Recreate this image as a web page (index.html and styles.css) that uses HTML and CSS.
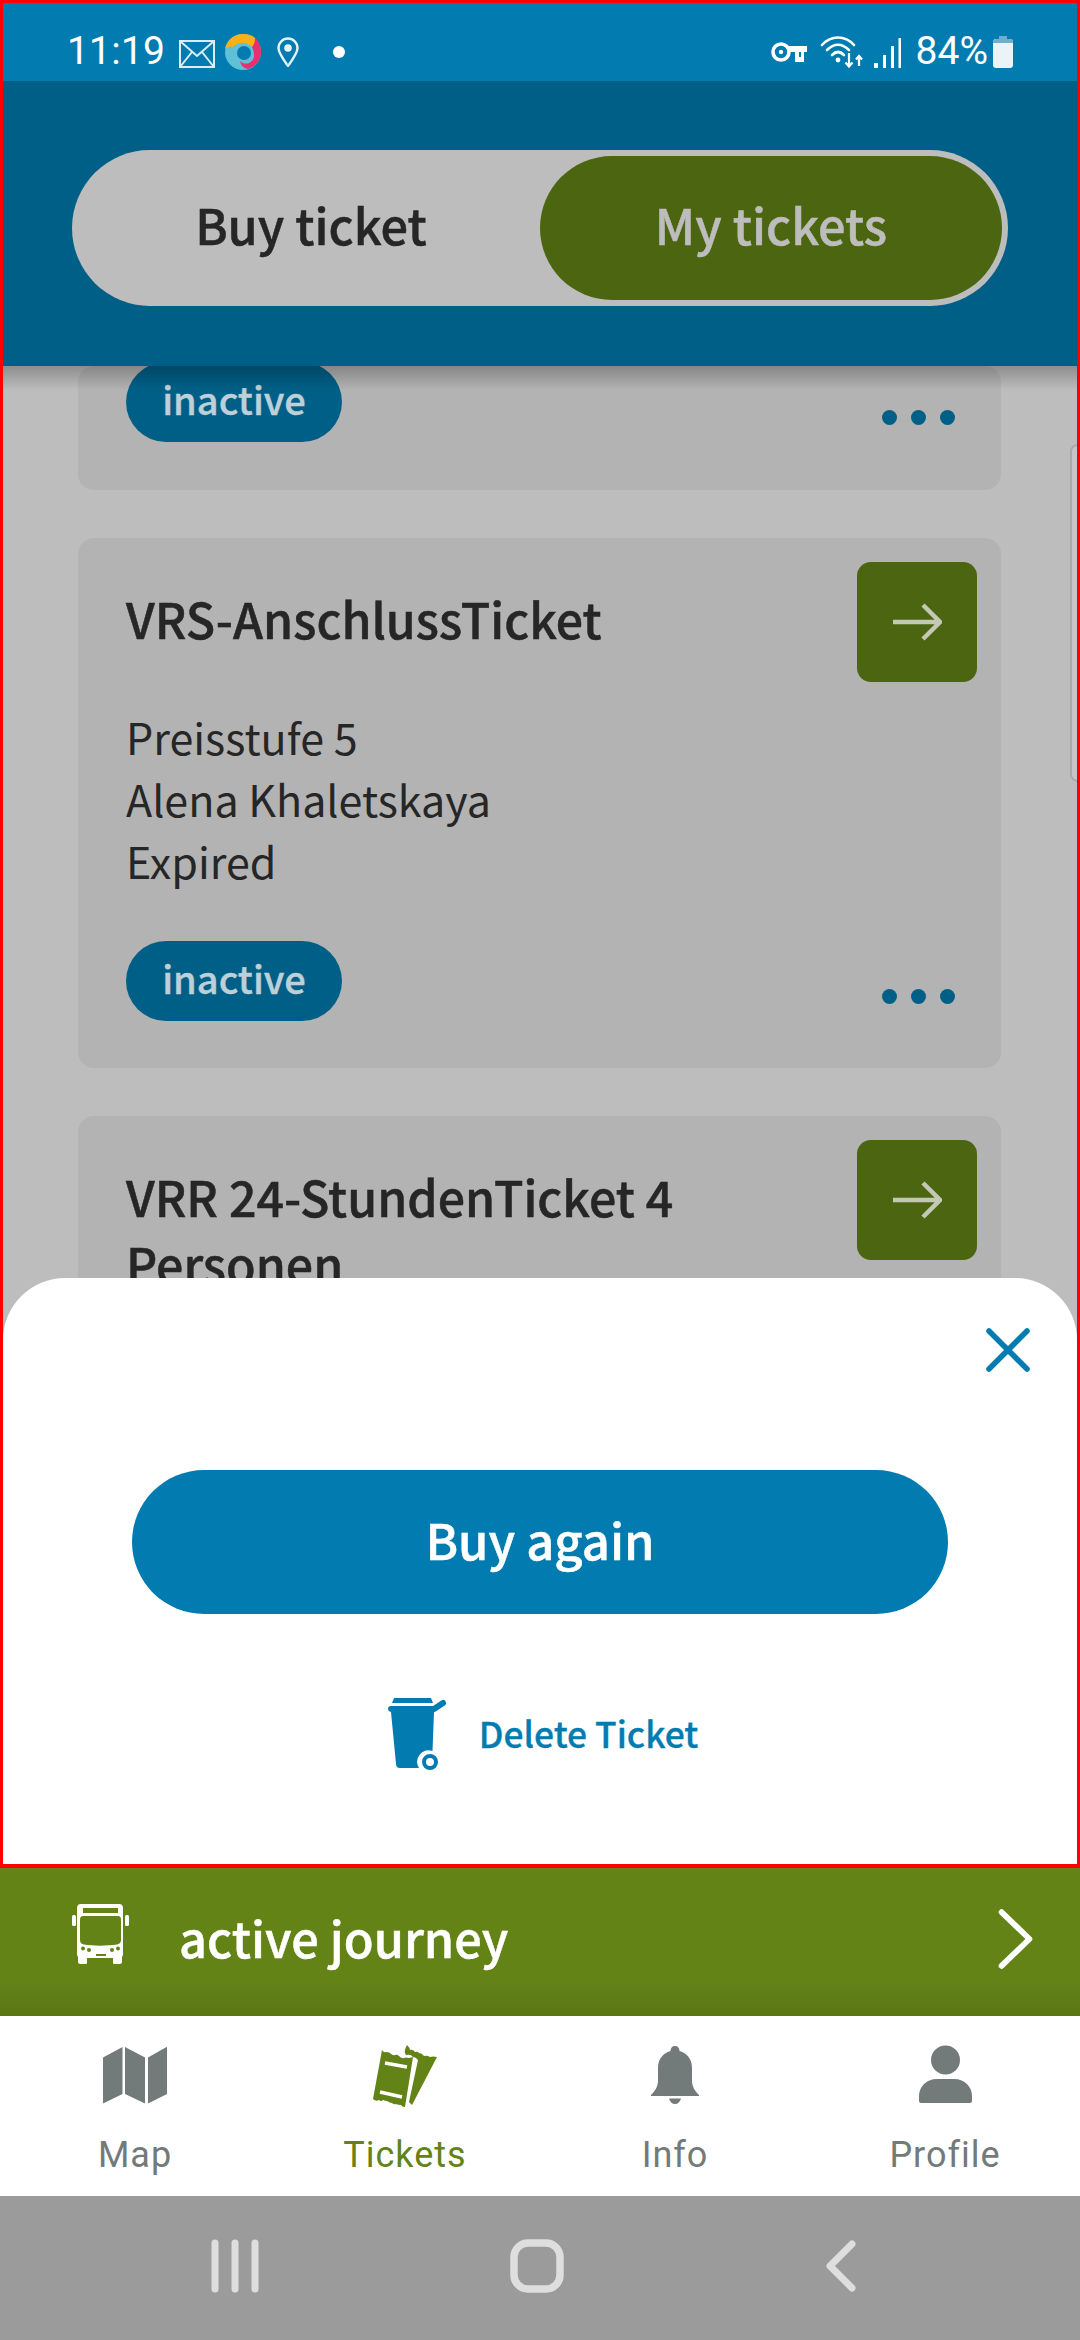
FILE: index.html
```html
<!DOCTYPE html>
<html lang="en">
<head>
<meta charset="utf-8">
<title>My tickets</title>
<link rel="stylesheet" href="styles.css">
</head>
<body>
<div class="page">
  <div class="frame">
    <div class="status">
      <div class="status-group">
        <span class="time">11:19</span>
        <svg class="i-mail" viewBox="0 0 36 28"><path d="M1 1h34v26H1zM1 1l17 15L35 1M1 27l12-15M35 27L23 12" fill="none" stroke="#dcedf5" stroke-width="2"/></svg>
        <svg class="i-app" viewBox="0 0 36 36"><circle cx="18" cy="18" r="18" fill="#5fc0d8"/><path d="M0 15C2 5 10 0 18 0c5 0 9 1 12 4 1 4-1 7-3 9-3-3-7-5-11-4-4 0-6 2-8 4-3-1-6 0-8 2z" fill="#fbb016"/><path d="M30 4c4 3 6 9 6 14 0 9-6 15-13 17-5-1-7-4-8-8 3 3 6 3 9 2 4-2 5-5 5-8s-1-6-2-8c2-2 3-5 3-9z" fill="#e8306f"/><circle cx="19" cy="19" r="7" fill="#027cb0"/></svg>
        <svg class="i-pin" viewBox="0 0 22 30"><path d="M11 29C6 22 1.500 16 1.500 11a9.500 9.500 0 0 1 19 0C20.500 16 16 22 11 29z" fill="none" stroke="#e8f3f8" stroke-width="2.400"/><circle cx="11" cy="11" r="3.800" fill="#e8f3f8"/></svg>
        <span class="dot"></span>
      </div>
      <div class="status-group status-right">
        <svg class="i-key" viewBox="0 0 36 20"><circle cx="10" cy="10" r="8" fill="none" stroke="#fff" stroke-width="3.600"/><circle cx="10" cy="10" r="2.200" fill="#fff"/><path d="M17 4h19v6h-3v10h-9V10h-7z" fill="#fff"/><path d="M28 10h2v5h-2z" fill="#027cb0"/></svg>
        <svg class="i-wifi" viewBox="0 0 44 34"><path d="M2 10C11 0 25 0 34 10M7 15c7-7 15-7 22 0M12 20c4-4 8-4 12 0" fill="none" stroke="#fff" stroke-width="2.600" stroke-linecap="round"/><circle cx="18" cy="25" r="2.400" fill="#fff"/><path d="M29 18v13M25.500 27.500l3.500 4 3.500-4M39 31V21M36 24.500l3-3.500 3 3.500" fill="none" stroke="#fff" stroke-width="2.200"/></svg>
        <svg class="i-signal" viewBox="0 0 27 30"><path d="M0 25h4v5H0zM9 17h3v13H9zM17 8h3v22h-3zM24.500 0h2.500v30h-2.500z" fill="#fff"/></svg>
        <span class="battery-text">84%</span>
        <svg class="i-batt" viewBox="0 0 20 32"><path d="M6 0h8v3H6z" fill="#6eaed0"/><rect y="3" width="20" height="29" rx="3" fill="#e9f3f8"/><path d="M0 6a3 3 0 0 1 3-3h14a3 3 0 0 1 3 3v1H0z" fill="#6eaed0"/></svg>
      </div>
    </div>
    <header class="top">
      <div class="toggle">
        <div class="toggle-item">Buy ticket</div>
        <div class="toggle-item toggle-on">My tickets</div>
      </div>
    </header>
    <main class="content">
      <div class="list">
        <article class="card card-clipped">
          <div class="card-foot">
            <span class="pill">inactive</span>
            <span class="dots"><i></i><i></i><i></i></span>
          </div>
        </article>
        <article class="card">
          <div class="card-head">
            <h2 class="card-title">VRS-AnschlussTicket</h2>
            <span class="go"><svg viewBox="0 0 50 38"><path d="M1 19h46M31 2l17 17-17 17" fill="none" stroke="#c3c9b5" stroke-width="4.500"/></svg></span>
          </div>
          <div class="card-body">
            <p>Preisstufe 5</p>
            <p>Alena Khaletskaya</p>
            <p>Expired</p>
          </div>
          <div class="card-foot">
            <span class="pill">inactive</span>
            <span class="dots"><i></i><i></i><i></i></span>
          </div>
        </article>
        <article class="card">
          <div class="card-head">
            <h2 class="card-title">VRR 24-StundenTicket 4 Personen</h2>
            <span class="go"><svg viewBox="0 0 50 38"><path d="M1 19h46M31 2l17 17-17 17" fill="none" stroke="#c3c9b5" stroke-width="4.500"/></svg></span>
          </div>
        </article>
      </div>
      <span class="scroll-handle"></span>
      <section class="sheet">
        <div class="sheet-close">
          <svg viewBox="0 0 44 44"><path d="M3 3l38 38M41 3L3 41" fill="none" stroke="#027cb0" stroke-width="5.500" stroke-linecap="round"/></svg>
        </div>
        <div class="buy-again">Buy again</div>
        <div class="delete">
          <svg class="i-bin" viewBox="0 0 58 72"><path d="M6 0H43L45 5H4z" fill="#027cb0"/><path d="M3 8H46V14L44.500 53A11.500 11.500 0 0 0 31 70H12C9 70 8 68 8 66L3 14C-1 13-1 8 3 8z" fill="#027cb0"/><path d="M46 11L55 5" stroke="#027cb0" stroke-width="6" stroke-linecap="round"/><circle cx="42" cy="64" r="6" fill="none" stroke="#027cb0" stroke-width="4"/></svg>
          <span>Delete Ticket</span>
        </div>
      </section>
    </main>
  </div>
  <div class="journey">
    <svg class="i-bus" viewBox="0 0 57 60"><path d="M9 0H47C50 0 51 2 51 4V50C51 52 50 53 50 53V58C50 59 49 60 48 60H42C41 60 41 59 41 58V54H15V58C15 59 15 60 14 60H8C7 60 6 59 6 58V53C6 53 5 52 5 50V4C5 2 6 0 9 0z" fill="#fff"/><path d="M11 4H46V9H11zM8 16C8 13 9 12 11 12H46C48 12 49 13 49 16V36C49 39 47 40 45 40.500C35 42 21 42 12 40.500C10 40 8 39 8 36z" fill="#638317"/><rect x="0" y="11" width="4" height="11" rx="1.500" fill="#fff"/><rect x="53" y="11" width="4" height="11" rx="1.500" fill="#fff"/><path d="M24 50H34V52H24z" fill="#638317"/><circle cx="11" cy="44.500" r="2" fill="#638317"/><circle cx="17" cy="46" r="2" fill="#638317"/><circle cx="46" cy="44.500" r="2" fill="#638317"/><circle cx="40" cy="46" r="2" fill="#638317"/></svg>
    <span class="journey-text">active journey</span>
    <svg class="i-chev" viewBox="0 0 34 58"><path d="M3 3l27 26L3 55" fill="none" stroke="#fff" stroke-width="5.500" stroke-linecap="round" stroke-linejoin="round"/></svg>
  </div>
  <nav class="tabs">
    <div class="tab">
      <svg class="tab-icon" viewBox="0 0 64 60"><path d="M0 11.500L19.500 1V48L0 57.500zM22 1L42 11.500V57.500L22 48zM45 11.500L64 .7V48L45 57.500z" fill="#727a7a"/></svg>
      <span>Map</span>
    </div>
    <div class="tab tab-on">
      <svg class="tab-icon" viewBox="0 1 64 60"><path d="M9 5q2 3 4 2 3 0 4 1 3 3 5 2t4 1q3 3 5 2t4 0q2 0 5-1L32 62q-3 0-4-2-3 0-5-1-2 1-4-1-2 0-5-2-2 0-4-1-2 2-4 0-3 2-6-1z" fill="#638317"/><path d="M34 0q3 3 3 5 3-1 5 2 3-1 4 1 3 0 5 3 3-1 6 1 3-1 7 0L39 60l-3-3L45 15q-2-3-5-3-2-3-7-2-3-3 1-10z" fill="#638317"/><path d="M12 18l22 4M7 47l22 5" stroke="#fff" stroke-width="3.500"/></svg>
      <span>Tickets</span>
    </div>
    <div class="tab">
      <svg class="tab-icon" viewBox="0 0 48 60"><path d="M24 0c3 0 4.500 2 4.500 5C36 7 41 13 41 22V34C41 41 44 45 48 49V50H0V49C4 45 7 41 7 34V22C7 13 12 7 19.500 5C19.500 2 21 0 24 0z" fill="#727a7a"/><path d="M18 52.500H30C29 56 27 58 24 58S19 56 18 52.500z" fill="#727a7a"/></svg>
      <span>Info</span>
    </div>
    <div class="tab">
      <svg class="tab-icon" viewBox="0 0 53 60"><circle cx="26.500" cy="14" r="14.500" fill="#727a7a"/><path d="M18 33H35C46 33 53 41 53 50V55C53 56 52 57 51 57H2C1 57 0 56 0 55V50C0 41 7 33 18 33z" fill="#727a7a"/></svg>
      <span>Profile</span>
    </div>
  </nav>
  <div class="sysnav">
    <svg class="sys-recent" viewBox="0 0 50 54"><path d="M5 4v46M25 4v46M45 4v46" stroke="#dedede" stroke-width="7" stroke-linecap="round"/></svg>
    <svg class="sys-home" viewBox="0 0 54 54"><rect x="4" y="4" width="46" height="46" rx="14" fill="none" stroke="#dedede" stroke-width="7.500"/></svg>
    <svg class="sys-back" viewBox="0 0 32 52"><path d="M27 4L5 26l22 22" fill="none" stroke="#dedede" stroke-width="7" stroke-linecap="round" stroke-linejoin="round"/></svg>
  </div>
</div>
</body>
</html>
```
FILE: styles.css
```css
* { box-sizing: border-box; }
html, body { margin: 0; padding: 0; }
body {
  width: 1080px;
  height: 2340px;
  overflow: hidden;
  font-family: "Noto Sans CJK SC", "Noto Sans", sans-serif;
  background: #fff;
}
.page { display: flex; flex-direction: column; width: 1080px; height: 2340px; }
.frame {
  display: flex;
  flex-direction: column;
  height: 1868px;
  border: 3px solid #f00;
  border-bottom-width: 4px;
  overflow: hidden;
  flex: none;
}
.status {
  flex: none;
  height: 78px;
  background: #027cb0;
  display: flex;
  justify-content: space-between;
  align-items: center;
  color: #fff;
  padding: 20px 64px 0 64px;
}
.status-group { display: flex; align-items: center; }
.time { font: 400 39px Roboto, sans-serif; letter-spacing: .2px; margin-top: -2px; width: 112px; }
.i-mail { width: 36px; height: 28px; margin-top: 4px; }
.i-app { width: 36px; height: 36px; margin-left: 10px; }
.i-pin { width: 22px; height: 30px; margin-left: 16px; }
.dot { width: 12px; height: 12px; border-radius: 50%; background: #fff; margin-left: 34px; }
.i-key { width: 36px; height: 20px; }
.i-wifi { width: 44px; height: 34px; margin-left: 13px; }
.i-signal { width: 27px; height: 30px; margin-left: 10px; margin-top: 2px; }
.battery-text { font: 400 39px Roboto, sans-serif; margin-left: 15px; margin-top: -2px; }
.i-batt { width: 20px; height: 32px; margin-left: 5px; }
.top {
  flex: none;
  height: 285px;
  background: #005f87;
  padding: 69px 69px 60px 69px;
  position: relative;
  z-index: 2;
}
.toggle {
  display: flex;
  height: 156px;
  width: 936px;
  background: #bdbdbd;
  border-radius: 78px;
  padding: 6px;
}
.toggle-item {
  flex: 1;
  display: flex;
  align-items: center;
  justify-content: center;
  font-size: 48.700px;
  font-weight: 500;
  -webkit-text-stroke: .5px currentColor;
  color: #262626;
  border-radius: 72px;
  padding-bottom: 8px;
}
.toggle-item:first-child { flex: 0 0 462px; padding-left: 4px; }
.toggle-on { background: #4c6510; color: #bdbdbd; }
.content {
  flex: 1;
  position: relative;
  overflow: hidden;
  background: #bdbdbd;
}
.content::before {
  content: "";
  position: absolute;
  top: 0;
  left: 0;
  right: 0;
  height: 24px;
  background: linear-gradient(#00000040, #0000);
  z-index: 1;
}
.list {
  display: flex;
  flex-direction: column;
  gap: 48px;
  padding: 0 76px 0 75px;
}
.card {
  background: #b3b3b3;
  border-radius: 16px;
  padding: 24px 24px 47px 48px;
}
.card-clipped { height: 124px; padding: 0 24px 0 48px; }
.card-clipped .card-foot { margin-top: -4px; }
.card-head { display: flex; justify-content: space-between; gap: 40px; min-height: 120px; }
.card-title {
  margin: 23px 0 0;
  font-size: 48.300px;
  line-height: 67px;
  font-weight: 500;
  -webkit-text-stroke: .5px currentColor;
  color: #262626;
}
.go {
  flex: none;
  width: 120px;
  height: 120px;
  border-radius: 14px;
  background: #4c6510;
  display: flex;
  align-items: center;
  justify-content: center;
}
.go svg { width: 50px; height: 38px; }
.card-body { margin-top: 23px; }
.card-body p {
  margin: 0;
  font-size: 43px;
  line-height: 62px;
  color: #262626;
}
.card-foot { display: flex; justify-content: space-between; align-items: flex-end; margin-top: 50px; }
.pill {
  width: 216px;
  height: 80px;
  border-radius: 40px;
  background: #005f87;
  color: #bdd0d8;
  font-size: 38px;
  font-weight: 500;
  -webkit-text-stroke: .4px currentColor;
  display: flex;
  align-items: center;
  justify-content: center;
  padding-bottom: 8px;
}
.dots { display: flex; gap: 14px; padding: 0 22px 17px 0; }
.dots i { width: 15px; height: 15px; border-radius: 50%; background: #005f87; }
.scroll-handle {
  position: absolute;
  right: -8px;
  top: 78px;
  width: 15px;
  height: 338px;
  border: 2px solid #a9a9a9;
  border-radius: 10px;
  background: #c6c6c6;
}
.sheet {
  position: absolute;
  left: 0;
  right: 0;
  bottom: 0;
  height: 586px;
  background: #fff;
  border-radius: 62px 62px 0 0;
  display: flex;
  flex-direction: column;
  align-items: center;
  z-index: 3;
}
.sheet-close { align-self: flex-end; margin: 50px 47px 0 0; height: 44px; width: 44px; }
.sheet-close svg { display: block; width: 44px; height: 44px; }
.buy-again {
  margin-top: 98px;
  width: 816px;
  height: 144px;
  border-radius: 72px;
  background: #027cb0;
  color: #fff;
  font-size: 49px;
  font-weight: 500;
  -webkit-text-stroke: .5px currentColor;
  display: flex;
  align-items: center;
  justify-content: center;
  padding-bottom: 8px;
}
.delete {
  display: flex;
  align-items: center;
  gap: 33px;
  margin: 84px 0 0 6px;
  color: #027cb0;
  font-size: 35.400px;
  font-weight: 500;
  -webkit-text-stroke: .3px currentColor;
}
.delete span { padding-bottom: 3px; }
.i-bin { width: 58px; height: 72px; }
.journey {
  flex: none;
  height: 148px;
  background: linear-gradient(#638317 76%, #5a7615 100%);
  display: flex;
  align-items: center;
  padding: 0 46px 0 72px;
  color: #fff;
}
.i-bus { width: 57px; height: 60px; margin-top: -16px; }
.journey-text {
  font-size: 48.700px;
  font-weight: 500;
  -webkit-text-stroke: .5px currentColor;
  margin-left: 50px;
  flex: 1;
  margin-top: -10px;
}
.i-chev { width: 36px; height: 60px; margin-top: -6px; }
.tabs { flex: none; height: 180px; background: #fff; display: grid; grid-template-columns: repeat(4, 270px); }
.tab {
  display: flex;
  flex-direction: column;
  align-items: center;
  color: #727a7a;
  font: 400 36px Roboto, sans-serif;
  letter-spacing: 1px;
  padding-top: 30px;
}
.tab span { margin-top: 27px; line-height: 44px; }
.tab-on { color: #638317; }
.tab-icon { height: 60px; overflow: visible; }
.tab:nth-child(1) .tab-icon, .tab:nth-child(2) .tab-icon { width: 64px; }
.tab:nth-child(3) .tab-icon { width: 48px; }
.tab:nth-child(4) .tab-icon { width: 53px; }
.sysnav {
  flex: 1;
  background: #9b9b9b;
  display: flex;
  align-items: center;
  padding: 0 0 4px 210px;
}
.sys-recent { width: 50px; height: 54px; }
.sys-home { width: 54px; height: 54px; margin-left: 250px; }
.sys-back { width: 32px; height: 52px; margin-left: 261px; }
```
